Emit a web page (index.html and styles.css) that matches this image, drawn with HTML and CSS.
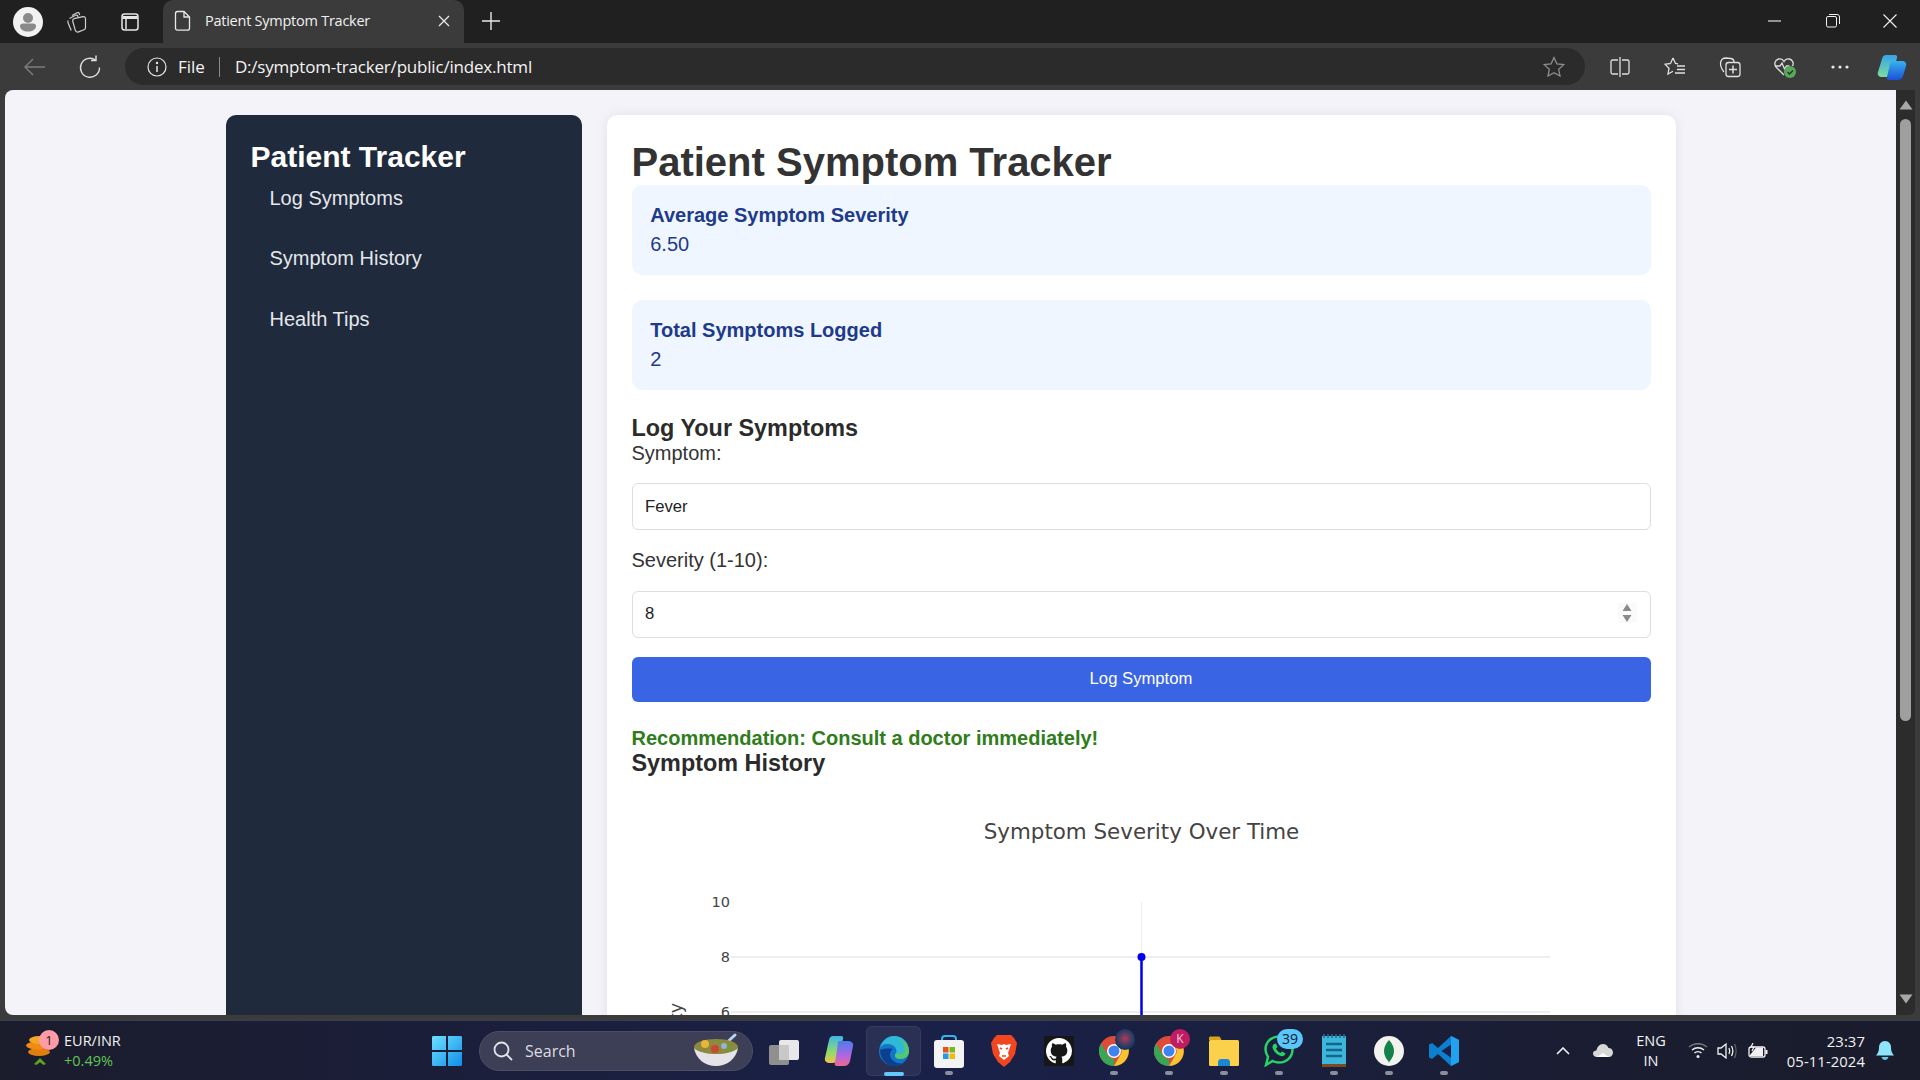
FILE: index.html
```html
<!DOCTYPE html>
<html lang="en">
<head>
<meta charset="utf-8">
<title>Patient Symptom Tracker</title>
<link rel="stylesheet" href="styles.css">
</head>
<body>
<div class="window">
  <header class="titlebar">
    <div class="profile"><svg width="30" height="30" viewBox="0 0 30 30"><circle cx="15" cy="15" r="15" fill="#f2f2f2"/><circle cx="15" cy="11" r="5" fill="#8a8a8a"/><path d="M7 19c0-1.500 1-2.500 3-2.500h10c2 0 3 1 3 2.500 0 3.500-3.500 5.500-8 5.500s-8-2-8-5.500z" fill="#8a8a8a"/></svg></div>
    <div class="tool-workspaces"><svg width="24" height="24" viewBox="0 0 24 24" fill="none" stroke="#d0d0d0" stroke-width="1.200"><path d="M7 5.500l5-2.800c1-.5 2 0 2.300 1l.4 1.300"/><path d="M4.500 8.500l6-3.300c1-.5 2 0 2.300 1l.4 1"/><path d="M3.200 10.500c-.5 1-.4 1.700 0 2.700l3 7.300"/><path d="M10 8.300l8.200-1.600c1.300-.2 2.300.6 2.300 2v8.800c0 1.100-.5 1.800-1.500 2.200l-5.500 2.200c-1.400.5-2.700-.2-3.200-1.600L7.800 11.500c-.4-1.500.5-2.900 2.200-3.200z"/></svg></div>
    <div class="tool-vtabs"><svg width="20" height="20" viewBox="0 0 20 20" fill="none" stroke="#e6e6e6" stroke-width="1.500"><rect x="2" y="2" width="16" height="16" rx="2.500"/><path d="M2.500 5.500h15" stroke-width="3"/><path d="M6 7v10"/></svg></div>
    <div class="tab">
      <svg width="18" height="22" viewBox="0 0 18 22" fill="none" stroke="#e8e8e8" stroke-width="1.300"><path d="M3.500 1.500h6.500l5.500 5.500v11c0 1.400-.8 2.200-2 2.200h-10c-1.200 0-2-.8-2-2.200v-14.300c0-1.400.8-2.200 2-2.200z"/><path d="M10 1.500v5.500h5.500"/></svg>
      <span class="tab-title">Patient Symptom Tracker</span>
      <svg class="tab-close" width="12" height="12" viewBox="0 0 12 12" stroke="#e8e8e8" stroke-width="1.300"><path d="M1 1l10 10M11 1L1 11"/></svg>
    </div>
    <svg class="new-tab" width="20" height="20" viewBox="0 0 20 20" stroke="#e8e8e8" stroke-width="1.400"><path d="M10 1v18M1 10h18"/></svg>
    <div class="win-controls">
      <div class="win-btn"><svg width="14" height="14" viewBox="0 0 14 14" stroke="#f0f0f0" stroke-width="1.100"><path d="M0 7h13"/></svg></div>
      <div class="win-btn"><svg width="14" height="14" viewBox="0 0 14 14" fill="none" stroke="#f0f0f0" stroke-width="1"><rect x=".5" y="2.500" width="10" height="10.500" rx="1.500"/><path d="M3 .5h8c1.500 0 2.500 1 2.500 2.500v7"/></svg></div>
      <div class="win-btn"><svg width="14" height="14" viewBox="0 0 14 14" stroke="#f0f0f0" stroke-width="1.100"><path d="M.5.500l13 13M13.500.500l-13 13"/></svg></div>
    </div>
  </header>

  <nav class="toolbar">
    <svg class="nav-back" width="24" height="24" viewBox="0 0 24 24" fill="none" stroke="#7d7d7d" stroke-width="1.400"><path d="M2 12h20M10 4l-8 8 8 8"/></svg>
    <svg class="nav-reload" width="24" height="24" viewBox="0 0 24 24" fill="none" stroke="#e0e0e0" stroke-width="1.400"><path d="M17.500 5a9.500 9.500 0 1 0 4 7.500"/><path d="M18 .5V5.500H13"/></svg>
    <div class="omnibox">
      <svg width="20" height="20" viewBox="0 0 20 20" fill="none" stroke="#e6e6e6" stroke-width="1.200"><circle cx="10" cy="10" r="9"/><path d="M10 9v6" stroke-width="1.500"/><circle cx="10" cy="6" r=".6" fill="#e6e6e6"/></svg>
      <span class="omni-file">File</span>
      <span class="omni-sep"></span>
      <span class="omni-url">D:/symptom-tracker/public/index.html</span>
      <svg class="omni-star" width="22" height="22" viewBox="0 0 22 22" fill="none" stroke="#8c8c8c" stroke-width="1.300"><path d="M11 1.500l2.900 6.300 6.800.8-5 4.700 1.300 6.800-6-3.400-6 3.400 1.300-6.800-5-4.700 6.800-.8z"/></svg>
    </div>
    <div class="tool-slot"><svg width="20" height="20" viewBox="0 0 20 20" fill="none" stroke="#e0e0e0" stroke-width="1.300"><path d="M8 3H2.500C1.500 3 1 3.500 1 4.500v11c0 1 .5 1.500 1.500 1.500H8M12 3h5.500c1 0 1.500.5 1.500 1.500v11c0 1-.5 1.500-1.500 1.500H12M10 0v20"/></svg></div>
    <div class="tool-slot"><svg width="22" height="22" viewBox="0 0 22 22" fill="none" stroke="#e0e0e0" stroke-width="1.300"><path d="M9 2l2.500 5.500 2.500.3M6.500 7.500L1 8.200l4 4-1 5.800 5-2.800M9 2L6.500 7.500"/><path d="M13 10h8M13 13.500h8M11 17h10" stroke-width="1.500"/></svg></div>
    <div class="tool-slot"><svg width="22" height="22" viewBox="0 0 22 22" fill="none" stroke="#e0e0e0" stroke-width="1.300"><path d="M5 16c-1-1-3.500-5-3.500-8C1.500 3.500 4 2 7 2l5 .5c2 .3 3 1.500 3 3.500"/><rect x="7" y="6.500" width="14" height="14" rx="2.500"/><path d="M14 9.500v8M10 13.500h8" stroke-width="1.500"/></svg></div>
    <div class="tool-slot"><svg width="24" height="24" viewBox="0 0 24 24" fill="none" stroke="#e0e0e0" stroke-width="1.300"><path d="M11 20L3 12C1 9.500 1.500 5 5.500 4c2.500-.6 4.500.6 5.500 2.500 1-1.900 3-3.100 5.500-2.500 3.500.9 4.500 4.500 3 7"/><path d="M2 11h5l2-3 2.500 6 2-3h3"/><circle cx="17" cy="17" r="6" fill="#5aa85c" stroke="none"/><path d="M14.500 17l2 2 3.500-3.500" stroke="#22361f" stroke-width="1.400"/></svg></div>
    <div class="tool-slot"><svg width="18" height="4" viewBox="0 0 18 4" fill="#e8e8e8"><circle cx="2" cy="2" r="1.600"/><circle cx="9" cy="2" r="1.600"/><circle cx="16" cy="2" r="1.600"/></svg></div>
    <div class="tool-slot last"><svg width="30" height="28" viewBox="0 0 30 28"><defs><linearGradient id="cpa" x1="0" y1="0" x2="0" y2="1"><stop offset="0" stop-color="#35a4e8"/><stop offset="1" stop-color="#7ddc9c"/></linearGradient><linearGradient id="cpb" x1="0" y1="0" x2="0" y2="1"><stop offset="0" stop-color="#36b2ef"/><stop offset="1" stop-color="#1c4fd8"/></linearGradient></defs><path d="M9 2h9c2 0 2.500 1.500 2 3l-5 16c-.6 2-2 3-4 3H5c-3 0-5-2-4-5l4-13c.6-2.500 2-4 4-4z" fill="url(#cpa)"/><path d="M15 8h10c3 0 5 2 4 5l-3 10c-.6 2-2 4-5 4h-9c-2 0-2.500-1.500-2-3l3-13c.4-2 1-3 2-3z" fill="url(#cpb)"/></svg></div>
  </nav>

  <div class="viewport">
    <div class="page">
      <div class="container">
        <aside class="sidebar">
          <h2 class="brand">Patient Tracker</h2>
          <ul class="side-nav">
            <li>Log Symptoms</li>
            <li>Symptom History</li>
            <li>Health Tips</li>
          </ul>
        </aside>
        <main class="content">
          <h1 class="page-title">Patient Symptom Tracker</h1>
          <section class="stat-card">
            <h3 class="stat-label">Average Symptom Severity</h3>
            <p class="stat-value">6.50</p>
          </section>
          <section class="stat-card">
            <h3 class="stat-label">Total Symptoms Logged</h3>
            <p class="stat-value">2</p>
          </section>
          <h2 class="section-title">Log Your Symptoms</h2>
          <form class="symptom-form">
            <label class="field-label" for="symptom">Symptom:</label>
            <input class="field" id="symptom" type="text" value="Fever">
            <label class="field-label" for="severity">Severity (1-10):</label>
            <div class="number-wrap">
              <input class="field field-number" id="severity" type="number" min="1" max="10" value="8">
              <span class="spinner"><svg width="10" height="18" viewBox="0 0 10 18" fill="#8a8a8a"><path d="M5 0l4.500 7H.5zM5 18L.5 11h9z"/></svg></span>
            </div>
            <button class="submit" type="button">Log Symptom</button>
          </form>
          <p class="recommendation">Recommendation: Consult a doctor immediately!</p>
          <h2 class="section-title">Symptom History</h2>
          <svg class="chart" width="1019" height="500" viewBox="0 0 1019 500">
            <text class="chart-title" x="509.500" y="62" text-anchor="middle">Symptom Severity Over Time</text>
            <g stroke="#eeeeee" stroke-width="2">
              <path d="M99 180H918M99 235H918"/>
            </g>
            <path d="M509.500 125V180" stroke="#eeeeee" stroke-width="1"/>
            <path d="M509.500 180V290" stroke="#0000ee" stroke-width="2.500"/>
            <circle cx="509.500" cy="180" r="4" fill="#0000ee"/>
            <g class="chart-tick" text-anchor="end">
              <text x="98" y="130">10</text>
              <text x="98" y="185">8</text>
              <text x="98" y="240">6</text>
            </g>
            <text class="chart-axis" x="50" y="226" text-anchor="end" transform="rotate(-90 50 226)">Severity</text>
          </svg>
        </main>
      </div>
    </div>
    <div class="scrollbar">
      <svg width="14" height="10" viewBox="0 0 14 10"><path d="M7 .5L13.500 9.500H.5z" fill="#a8a8a8"/></svg>
      <div class="thumb"></div>
      <svg class="scroll-down" width="14" height="10" viewBox="0 0 14 10"><path d="M7 9.500L13.500 .5H.5z" fill="#a8a8a8"/></svg>
    </div>
  </div>
</div>

<footer class="taskbar">
  <div class="widget">
    <div class="widget-icon">
      <svg width="30" height="40" viewBox="0 0 30 40"><ellipse cx="15" cy="21" rx="11" ry="4" fill="#e07f10"/><ellipse cx="13" cy="14.500" rx="11" ry="4" fill="#f08c12"/><ellipse cx="15" cy="9" rx="10" ry="4" fill="#f5a623"/><path d="M10 33l6-6 6 6-2.500 1-3.500-2.800-3.500 2.800z" fill="#5da31e"/></svg>
      <span class="widget-badge">1</span>
    </div>
    <div class="widget-text">
      <span class="pair">EUR/INR</span>
      <span class="delta">+0.49%</span>
    </div>
  </div>
  <svg class="start" width="30" height="30" viewBox="0 0 30 30"><defs><linearGradient id="win" x1="0" y1="0" x2="1" y2="1"><stop offset="0" stop-color="#6fe0ff"/><stop offset="1" stop-color="#0f8fe8"/></linearGradient></defs><path d="M0 1.500C0 .5.500 0 1.500 0H14v14H0zM16 0h12.500c1 0 1.500.5 1.500 1.500V14H16zM0 16h14v14H1.500C.5 30 0 29.500 0 28.500zM16 16h14v12.500c0 1-.5 1.500-1.500 1.500H16z" fill="url(#win)"/></svg>
  <div class="search">
    <svg width="20" height="20" viewBox="0 0 20 20" fill="none" stroke="#e4e4e8" stroke-width="1.800"><circle cx="8.500" cy="8.500" r="7"/><path d="M13.500 13.500l5.500 5.500"/></svg>
    <span class="search-text">Search</span>
    <svg class="bowl" width="48" height="36" viewBox="0 0 48 36"><path d="M30 15L43 3" stroke="#b9d4ee" stroke-width="3" stroke-linecap="round"/><ellipse cx="24" cy="15" rx="22" ry="8" fill="#8c8a3c"/><circle cx="13" cy="12" r="4" fill="#e8b53a"/><circle cx="23" cy="17" r="4" fill="#cf4436"/><circle cx="32" cy="14" r="3" fill="#8fb5d8"/><circle cx="38" cy="17" r="2.500" fill="#6f9a3a"/><path d="M2 16c2 11 11 18 22 18s20-7 22-18c-4 4-13 6-22 6S6 20 2 16z" fill="#e6e3e8"/></svg>
  </div>
  <div class="apps">
    <div class="app"><svg width="30" height="30" viewBox="0 0 30 30"><rect x="10" y="4" width="20" height="20" rx="2" fill="#e8e8e8"/><rect x="0" y="9" width="20" height="20" rx="2" fill="#8f8f8f"/><rect x="10" y="9" width="10" height="15" fill="#c8c8c8"/></svg></div>
    <div class="app"><svg width="30" height="32" viewBox="0 0 30 32"><defs><linearGradient id="cp1" x1="0" y1="0" x2="0" y2="1"><stop offset="0" stop-color="#3fb5e8"/><stop offset=".6" stop-color="#8fdc6a"/><stop offset="1" stop-color="#f2c14a"/></linearGradient><linearGradient id="cp2" x1="0" y1="0" x2="0" y2="1"><stop offset="0" stop-color="#4a7df0"/><stop offset=".6" stop-color="#b265e0"/><stop offset="1" stop-color="#ee6a8a"/></linearGradient></defs><path d="M9 1h8c2 0 2.500 1.500 2 3l-6 21c-.6 2-2 3-4 3H6C3 28 0 26 1 23L5 5c.6-2.500 2-4 4-4z" fill="url(#cp1)"/><path d="M15 6h9c3 0 6 2 5 5l-3 15c-.6 3-3 5-6 5h-7c-2 0-3-1.500-2-3l3-20c.3-1.500 1-2 1-2z" fill="url(#cp2)"/></svg></div>
    <div class="app active"><svg width="30" height="30" viewBox="0 0 30 30"><circle cx="15" cy="15" r="15" fill="#1276c8"/><path d="M1 12C3 5 8 0 15 0c8 0 15 6 15 15 0 5-4 8-9 8-3 0-5-1.500-5-3.500 0-1.500 1.500-2 1.500-4.500 0-4-4-7-9-7S3 10 1 12z" fill="#2fb8d8"/><path d="M20 3c6 2 10 7 10 12 0 5-4 8-9 8-3 0-5-1.500-5-3.500 0-1 .5-1.500 1-2.500 1 1 3 1.500 5 1 3-.5 4-3 3.500-6C25 9 23 5 20 3z" fill="#55c86b"/><path d="M1 14c0 9 7 16 14 16 3 0 6-1 8-3-4 1-9-1-11-5-2-3-1-7 2-9-6-1-11 0-13 1z" fill="#0c3f8f"/></svg></div>
    <div class="app running"><svg width="30" height="34" viewBox="0 0 30 34"><path d="M8 10V5c0-2 1-3 3-3h8c2 0 3 1 3 3v5" fill="none" stroke="#31b4e8" stroke-width="2"/><rect y="6" width="30" height="28" rx="3" fill="#f3f3f3"/><rect x="9" y="13" width="5.500" height="5.500" fill="#e8501f"/><rect x="15.500" y="13" width="5.500" height="5.500" fill="#7ab91a"/><rect x="9" y="19.500" width="5.500" height="5.500" fill="#1f9be8"/><rect x="15.500" y="19.500" width="5.500" height="5.500" fill="#f5b80c"/></svg></div>
    <div class="app"><svg width="26" height="32" viewBox="0 0 26 32"><path d="M6 0h14l3 3 3 5-2 11-5 8-6 5-6-5-5-8L0 8l3-5z" fill="#f1461f"/><path d="M6 9l5 1 2-1 2 1 5-1-2 6-1 3 1 3-5 4-5-4 1-3-1-3z" fill="#fff"/><path d="M9 13l2 1M17 13l-2 1M11 21h4" stroke="#f1461f" stroke-width="1.500" fill="none"/></svg></div>
    <div class="app"><svg width="30" height="30" viewBox="0 0 30 30"><rect width="30" height="30" fill="#161616"/><svg x="2" y="2" width="26" height="26" viewBox="0 0 16 16"><path fill="#fff" d="M8 0C3.580 0 0 3.580 0 8c0 3.540 2.290 6.530 5.470 7.590.4.070.55-.17.55-.38 0-.19-.01-.82-.01-1.490-2.010.37-2.530-.49-2.690-.94-.09-.23-.48-.94-.82-1.130-.28-.15-.68-.52-.01-.53.63-.01 1.080.58 1.230.82.72 1.210 1.870.87 2.330.66.07-.52.28-.87.51-1.070-1.780-.2-3.640-.89-3.640-3.950 0-.87.31-1.590.82-2.150-.08-.2-.36-1.020.08-2.120 0 0 .67-.21 2.200.82.64-.18 1.320-.27 2-.27.68 0 1.360.09 2 .27 1.530-1.040 2.200-.82 2.200-.82.44 1.100.16 1.920.08 2.120.51.56.82 1.270.82 2.150 0 3.070-1.870 3.750-3.650 3.950.29.25.54.73.54 1.480 0 1.070-.01 1.930-.01 2.200 0 .21.15.46.55.38A8.013 8.013 0 0016 8c0-4.420-3.580-8-8-8z"/></svg></svg></div>
    <div class="app running">
      <svg width="30" height="30" viewBox="0 0 30 30"><circle cx="15" cy="15" r="15" fill="#dd4b39"/><path d="M15 30A15 15 0 0 1 2 7.500L9 19c1.500 2.500 3.500 4 6 4l.5 7z" fill="#3aa655"/><path d="M15 8h13a15 15 0 0 1-13 22l7-12c.8-1.500 1-3 0-5-1-2-3-5-7-5z" fill="#f7c530"/><circle cx="15" cy="15" r="7" fill="#fff"/><circle cx="15" cy="15" r="5.500" fill="#3f83ee"/></svg>
      <span class="app-avatar hero"></span>
    </div>
    <div class="app running">
      <svg width="30" height="30" viewBox="0 0 30 30"><circle cx="15" cy="15" r="15" fill="#dd4b39"/><path d="M15 30A15 15 0 0 1 2 7.500L9 19c1.500 2.500 3.500 4 6 4l.5 7z" fill="#3aa655"/><path d="M15 8h13a15 15 0 0 1-13 22l7-12c.8-1.500 1-3 0-5-1-2-3-5-7-5z" fill="#f7c530"/><circle cx="15" cy="15" r="7" fill="#fff"/><circle cx="15" cy="15" r="5.500" fill="#3f83ee"/></svg>
      <span class="app-avatar letter">K</span>
    </div>
    <div class="app running"><svg width="30" height="30" viewBox="0 0 30 30"><path d="M0 2c0-1 .5-1.500 1.500-1.500h8c1 0 1.500.5 2 1.500l1 2H0z" fill="#d8a317"/><rect y="4" width="30" height="26" rx="1.500" fill="#fbd04a"/><path d="M9 27c0-3 1-4 3-4h6c2 0 3 1 3 4v3H9z" fill="#1a86d8"/></svg></div>
    <div class="app running">
      <svg width="30" height="32" viewBox="0 0 30 32" fill="none"><path d="M2 30l2-8C2.500 19.500 1.500 17 1.500 14.500 1.500 7 7.500 1.500 15 1.500S28.500 7 28.500 14.500 22.500 27.500 15 27.500c-2.500 0-4.500-.5-6.500-1.500z" stroke="#25d366" stroke-width="2.500"/><path d="M10 9c-1.500 1-2 3-1 5 1.500 3.500 4.500 6 8 7 2 .5 4-.5 4.500-2.500l-3.500-2-1.500 1.500c-2-1-3.500-2.500-4.500-4.500l1.500-1.500-1.500-3.500z" fill="#25d366"/></svg>
      <span class="app-count">39</span>
    </div>
    <div class="app running"><svg width="24" height="34" viewBox="0 0 24 34"><rect y="2" width="24" height="28" fill="#3eb6dc"/><rect y="30" width="24" height="3" fill="#7b4a1e"/><path d="M2 0v4M6 0v4M10 0v4M14 0v4M18 0v4M22 0v4" stroke="#1d6f90" stroke-width="1.500"/><path d="M4 10h16M4 16h16M4 22h16" stroke="#13678a" stroke-width="2.500"/></svg></div>
    <div class="app running"><svg width="30" height="30" viewBox="0 0 30 30"><circle cx="15" cy="15" r="15" fill="#f2f2ee"/><path d="M15 4c3 3 5 7 5 11s-2 8-4.500 10.500L15 27l-.5-1.500C12 23 10 19 10 15s2-8 5-11z" fill="#13814a"/></svg></div>
    <div class="app running"><svg width="30" height="32" viewBox="0 0 30 32"><path d="M22 1l8 4v22l-8 4-13-12-6 5-3-1.500V9.500L3 8l6 5z" fill="#0d7fcf"/><path d="M22 1l8 4v22l-8 4z" fill="#22a2ee"/><path d="M22 9.500L12.500 16l9.500 6.500z" fill="#1a2148"/></svg></div>
  </div>
  <div class="tray">
    <svg class="tray-caret" width="14" height="8" viewBox="0 0 14 8" fill="none" stroke="#f2f2f2" stroke-width="1.600"><path d="M1 7l6-6 6 6"/></svg>
    <svg class="tray-cloud" width="20" height="13" viewBox="0 0 20 13"><path d="M4 13C1.500 13 0 11.500 0 9.500S1.500 6.500 3.500 6.500C4 3 6.500 0 10 0c2.500 0 4.500 1.500 5.500 4 2.500 0 4.500 2 4.500 4.500S18 13 16 13z" fill="#d8d8d8"/><path d="M4 13l6-4 6 4z" fill="#fff"/></svg>
    <div class="tray-lang"><span>ENG</span><span>IN</span></div>
    <svg class="tray-wifi" width="20" height="16" viewBox="0 0 20 16" fill="none" stroke="#f2f2f2" stroke-width="1.500"><path d="M4 7c3.500-3 8.500-3 12 0M6.500 10c2-1.800 5-1.800 7 0"/><path d="M1 4c5-4.500 13-4.500 18 0" stroke="#777"/><circle cx="10" cy="13.500" r="1.500" fill="#f2f2f2" stroke="none"/></svg>
    <svg class="tray-volume" width="20" height="18" viewBox="0 0 20 18" fill="none" stroke="#f2f2f2" stroke-width="1.300"><path d="M1 6v6h3l5 4V2L4 6z"/><path d="M12 6c1 2 1 4 0 6M14.500 4c1.600 3 1.600 7 0 10"/><path d="M17.500 2c2 4 2 10 0 14" stroke="#666"/></svg>
    <svg class="tray-battery" width="20" height="16" viewBox="0 0 20 16" fill="none" stroke="#f2f2f2" stroke-width="1.300"><rect x="1" y="4" width="16" height="10" rx="2"/><path d="M18.500 7v4" stroke-width="2"/><path d="M2 12L8 4.500H15V13H2z" fill="#f2f2f2" stroke="none"/><path d="M5 0L3 4h3L4 8" stroke-width="1.200"/></svg>
    <div class="tray-clock"><span>23:37</span><span>05-11-2024</span></div>
    <svg class="tray-bell" width="18" height="20" viewBox="0 0 18 20"><path d="M9 0c4 0 6 3 6 6.500 0 4 1 5.500 3 8H0c2-2.500 3-4 3-8C3 3 5 0 9 0z" fill="#8fe4fb"/><path d="M5.500 16h7c-.5 2-2 3-3.500 3s-3-1-3.500-3z" fill="#5bcdee"/></svg>
  </div>
</footer>
</body>
</html>
```

FILE: styles.css
```css
* { box-sizing: border-box; }
html, body { margin: 0; height: 100%; overflow: hidden; }
body {
  width: 1920px;
  height: 1080px;
  display: flex;
  flex-direction: column;
  font-family: "Liberation Sans", Arial, sans-serif;
  background: #3b3b3b;
}
.window { display: flex; flex-direction: column; height: 1020px; flex: none; background: #3b3b3b; }

/* browser tab strip */
.titlebar { height: 43px; flex: none; display: flex; align-items: center; background: #202020; padding-left: 13px; }
.profile { width: 30px; height: 30px; }
.tool-workspaces { width: 24px; height: 24px; margin-left: 22px; }
.tool-vtabs { width: 20px; height: 20px; margin-left: 31px; }
.tab {
  width: 301px; height: 43px; margin-left: 23px; padding: 0 14px 2px 11px;
  display: flex; align-items: center; gap: 13px;
  background: #3b3b3b; border-radius: 10px 10px 0 0;
  color: #f0f0f0; font: 14.500px "Open Sans", sans-serif;
}
.tab-title { white-space: nowrap; letter-spacing: -.25px; }
.tab-close { margin-left: auto; }
.new-tab { margin: 0 0 2px 17px; }
.win-controls { margin-left: auto; display: flex; }
.win-btn { width: 57.500px; height: 43px; padding: 0 2px 2px 0; display: flex; align-items: center; justify-content: center; }

/* address bar */
.toolbar { height: 47px; flex: none; display: flex; align-items: center; background: #3b3b3b; padding-left: 23px; }
.nav-reload { margin-left: 31px; }
.omnibox {
  width: 1460px; height: 37px; margin: 0 7px 0 23px; padding: 0 20px 0 22px; flex: none;
  display: flex; align-items: center;
  background: #2b2b2b; border-radius: 19px;
  color: #f4f4f4; font: 17px "Open Sans", sans-serif;
}
.omni-file { margin-left: 11px; }
.omni-sep { width: 1px; height: 20px; background: #8a8a8a; margin: 0 15px 0 14px; }
.omni-url { letter-spacing: -.2px; white-space: nowrap; }
.omni-star { margin-left: auto; }
.tool-slot { width: 55px; height: 47px; display: flex; align-items: center; justify-content: center; flex: none; }
.tool-slot.last { width: 50px; }

/* page area */
.viewport { flex: 1; min-height: 0; display: flex; padding: 0 5px 5px 5px; }
.page { flex: 1; min-width: 0; background: #f3f3f9; border-radius: 8px 0 0 8px; overflow: hidden; padding: 25px 0; }
.container { width: 1450px; margin: 0 auto; display: flex; gap: 25px; }
.sidebar { width: 356px; flex: none; padding: 25px; background: #1f2a3c; border-radius: 10px; color: #fff; }
.brand { margin: 0 0 12.500px; font-size: 30px; font-weight: 700; line-height: 34px; }
.side-nav { list-style: none; margin: 0; padding: 0 0 0 19px; color: #e5e7eb; font-size: 20px; }
.side-nav li { height: 60.800px; line-height: 23px; }
.content { flex: 1; min-width: 0; padding: 25px; background: #fff; border-radius: 10px; box-shadow: 0 0 12px rgba(0, 0, 0, .08); color: #333; }
.page-title { margin: 0; font-size: 40px; font-weight: 700; line-height: 45px; }
.stat-card { height: 90px; margin-bottom: 25px; padding: 18.750px; background: #eff6ff; border-radius: 10px; color: #1e3a8a; }
.stat-label { margin: 0 0 6px; font-size: 20px; font-weight: 700; line-height: 23px; }
.stat-value { margin: 0; font-size: 20px; line-height: 23px; }
.section-title { margin: 0; font-size: 23.400px; font-weight: 700; line-height: 27.600px; color: #2b2b2b; }
.symptom-form { display: flex; flex-direction: column; margin-top: -1px; }
.field-label { font-size: 20px; line-height: 23px; color: #333; }
.field {
  width: 100%; height: 47px; margin: 18.500px 0 19px; padding: 0 12.500px;
  border: 1.500px solid #ddd; border-radius: 6px; background: #fff;
  color: #222; font: 16.670px "Liberation Sans", Arial, sans-serif;
}
.number-wrap { position: relative; }
.field-number { display: block; appearance: textfield; }
.field-number::-webkit-inner-spin-button { appearance: none; }
.spinner {
  position: absolute; right: 14px; top: 31px; width: 19px; height: 20px;
  display: flex; align-items: center; justify-content: center; background: #fafafa;
}
.submit { height: 45px; border: 0; border-radius: 6px; background: #3964e4; color: #fff; font: 16.670px "Liberation Sans", Arial, sans-serif; }
.recommendation { margin: 25px 0 0; font-size: 20px; font-weight: 700; line-height: 23px; color: #2f7d1a; }
.chart { display: block; }
.chart-title { font: 21.400px "DejaVu Sans", Verdana, sans-serif; fill: #444; }
.chart-tick text { font: 14.500px "DejaVu Sans", Verdana, sans-serif; fill: #444; }
.chart-axis { font: 17.500px "DejaVu Sans", Verdana, sans-serif; fill: #444; }

/* scrollbar */
.scrollbar { width: 19px; flex: none; background: #2c2c2c; display: flex; flex-direction: column; align-items: center; padding-top: 10px; border-radius: 0 0 6px 0; }
.thumb { width: 11px; height: 602px; margin-top: 9px; background: #9f9f9f; border-radius: 6px; }
.scroll-down { margin-top: auto; margin-bottom: 11px; }

/* windows taskbar */
.taskbar {
  height: 60px; flex: none; display: flex; align-items: center;
  border-top: 1px solid #3a3d55;
  background: linear-gradient(90deg, #1b1c2c 0%, #1a2149 50%, #1a1d30 85%, #1a1c2c 100%);
  color: #f2f2f2; font-family: "Open Sans", sans-serif;
}
.widget { width: 432px; flex: none; display: flex; align-items: center; padding-left: 24px; }
.widget-icon { position: relative; width: 30px; height: 40px; }
.widget-badge {
  position: absolute; left: 15px; top: -1px; width: 20px; height: 20px; border-radius: 50%;
  background: #ff9aa8; color: #222; font-size: 13px; line-height: 20px; text-align: center;
}
.widget-text { display: flex; flex-direction: column; margin-left: 10px; font-size: 14.500px; line-height: 20px; }
.delta { color: #62c554; }
.start { flex: none; }
.search {
  width: 274px; height: 40px; margin-left: 17px; padding: 0 12px 0 13px; flex: none;
  display: flex; align-items: center; gap: 12px;
  background: #3c3f56; border: 1px solid #4b4e66; border-radius: 20px;
  color: #dcdce0; font-size: 16px;
}
.bowl { margin-left: auto; margin-top: -2px; }
.apps { display: flex; margin-left: 3px; flex: none; }
.app { position: relative; width: 55px; height: 50px; display: flex; align-items: center; justify-content: center; }
.app.running::after {
  content: ""; position: absolute; left: 23.500px; bottom: 1px; width: 8px; height: 4px;
  border-radius: 2px; background: #8b8e9c;
}
.app.active { background: #2a3054; border-radius: 6px; box-shadow: inset 0 0 0 1px #363c60; }
.app.active::after {
  content: ""; position: absolute; left: 17.500px; bottom: 0; width: 20px; height: 4px;
  border-radius: 2px; background: #64c8ff;
}
.app-avatar { position: absolute; left: 29px; top: 3px; width: 20px; height: 20px; border-radius: 50%; }
.app-avatar.hero { background: radial-gradient(circle at 50% 45%, #b03a5a 0%, #1a3c66 60%, #14233f 100%); height: 21px; }
.app-avatar.letter { background: #c01c62; color: #f7c9dc; font-size: 12px; line-height: 20px; text-align: center; }
.app-count {
  position: absolute; left: 26px; top: 3px; width: 26px; height: 20px; border-radius: 10px;
  background: #5bc6fb; color: #10202e; font-size: 14px; line-height: 20px; text-align: center;
}
.tray { margin-left: auto; padding-right: 26px; display: flex; align-items: center; flex: none; }
.tray-cloud { margin-left: 23px; }
.tray-lang { width: 52px; margin-left: 12.500px; display: flex; flex-direction: column; align-items: center; font-size: 14.500px; line-height: 20px; }
.tray-wifi { margin-left: 11px; }
.tray-volume { margin-left: 9px; }
.tray-battery { margin-left: 11px; }
.tray-clock { width: 97px; display: flex; flex-direction: column; align-items: flex-end; font-size: 14.800px; line-height: 20px; letter-spacing: .1px; }
.tray-bell { margin-left: 11px; }
```
